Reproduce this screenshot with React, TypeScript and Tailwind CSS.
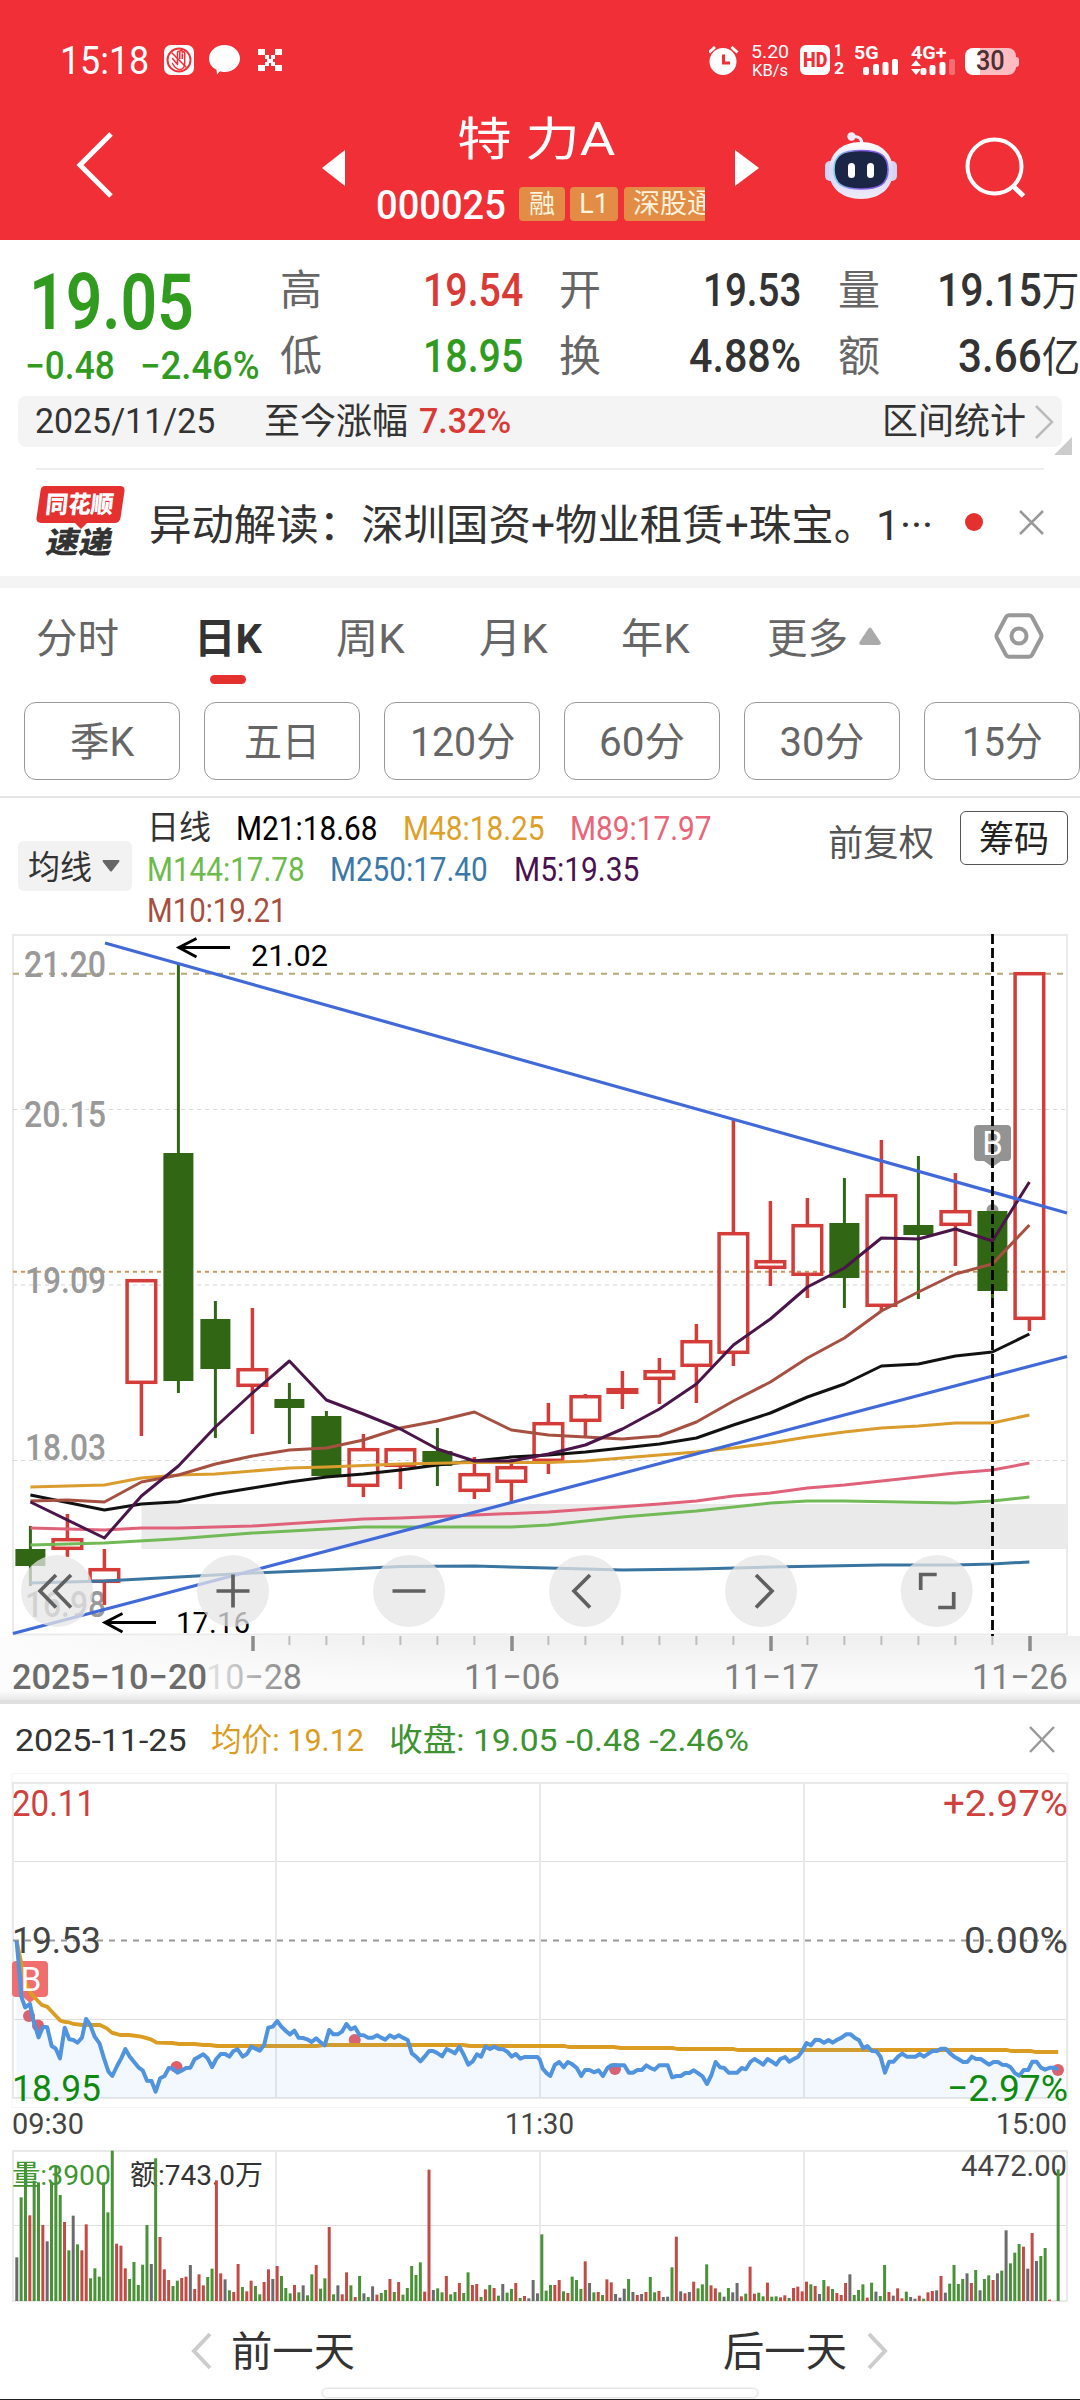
import { useLayoutEffect, useRef, useState, type ReactNode } from "react";

const FONT = "font-['Roboto','Noto_Sans_CJK_SC',sans-serif]";

/** A single line of text condensed or widened to an exact width. */
function Fit({ w, className = "", children }: { w: number; className?: string; children: ReactNode }) {
  const ref = useRef<HTMLSpanElement>(null);
  const [s, setS] = useState(1);
  useLayoutEffect(() => {
    if (ref.current) setS(w / ref.current.offsetWidth);
  }, [w]);
  return (
    <span className={"block shrink-0 leading-none " + className} style={{ width: w }}>
      <span ref={ref} className="inline-block origin-left whitespace-pre leading-none" style={{ transform: `scaleX(${s})` }}>
        {children}
      </span>
    </span>
  );
}

/* ---------- header ---------- */

function StatusBar() {
  return (
    <div className="flex h-10 items-center text-white">
      <Fit w={89} className="ml-[60px] pt-0.5 text-[39px]">15:18</Fit>
      <svg className="ml-[15px]" width="30" height="30" viewBox="0 0 30 30">
        <rect width="30" height="30" rx="7" fill="#fff" />
        <circle cx="15" cy="15" r="11.500" fill="none" stroke="#F12F37" strokeWidth="2" />
        <path d="M8.500 13.500l5 6V7.500a1.200 1.200 0 012.400 0V6.500a1.200 1.200 0 012.400 0v1.500a1.200 1.200 0 012.400 0V18c0 5-2 6.500-5 6.500s-5-2-7.200-6" fill="none" stroke="#F12F37" strokeWidth="1.500" strokeLinecap="round" strokeLinejoin="round" />
        <path d="M15.800 8v6M18.200 9v5M7.500 7.500l15 15" stroke="#F12F37" strokeWidth="1.500" />
      </svg>
      <svg className="ml-[15px]" width="31" height="30" viewBox="0 0 31 30">
        <path d="M15.500 0C24 0 31 6 31 13.500S24 27 15.500 27c-2 0-3.500-.4-4.500-.8L8 29.500l-.5-4.700C3 22.500 0 18.500 0 13.500 0 6 7 0 15.500 0z" fill="#fff" />
      </svg>
      <svg className="ml-[18px]" width="24" height="24" viewBox="0 0 24 24" fill="#fff">
        <path d="M0 1h7v6H0zM17 1h7v6h-7zM7 7h4v4H7zM13 7h4v4h-4zM9 11h6v4H9zM7 14h4v4H7zM13 14h4v4h-4zM0 17h7v6H0zM17 17h7v6h-7z" />
      </svg>
      <svg className="ml-[427px]" width="30" height="30" viewBox="0 0 30 30">
        <circle cx="14" cy="16.500" r="13.500" fill="#fff" />
        <path d="M0 7.500l6-5.500M28.500 7.500l-6-5.500" stroke="#fff" strokeWidth="3" />
        <path d="M14.500 9.500V18H21" stroke="#F12F37" strokeWidth="3" fill="none" />
      </svg>
      <div className="ml-3 flex flex-col gap-px pt-0.5">
        <Fit w={38} className="text-[18px]">5.20</Fit>
        <Fit w={36} className="ml-px text-[17px]">KB/s</Fit>
      </div>
      <div className="ml-[11px] flex h-[30px] w-[30px] items-center justify-center rounded-md bg-white">
        <Fit w={24} className="text-[21px] font-black text-[#F12F37]">HD</Fit>
      </div>
      <div className="ml-1 flex flex-col gap-0.5 text-[16px] font-bold">
        <Fit w={8} className="">1</Fit>
        <Fit w={10} className="">2</Fit>
      </div>
      <div className="ml-[10px] flex h-8 w-[46px] flex-col">
        <Fit w={25} className="text-[18px] font-bold">5G</Fit>
        <svg className="-mt-[3px] ml-[9px]" width="36" height="16" viewBox="0 0 36 16" fill="#fff">
          <rect x="0" y="8" width="6" height="8" rx="2" /><rect x="10" y="5" width="6" height="11" rx="2" />
          <rect x="19.500" y="3" width="6" height="13" rx="2" /><rect x="29" y="0" width="6" height="16" rx="2" />
        </svg>
      </div>
      <div className="ml-[11px] flex h-8 w-[46px] flex-col">
        <Fit w={35} className="text-[18px] font-bold">4G+</Fit>
        <svg className="-mt-[3px]" width="45" height="16" viewBox="0 0 45 16" fill="#fff">
          <path d="M0 7l5-6 5 6zM0 10h10l-5 6z" />
          <rect x="9.500" y="9" width="6" height="7" rx="2" /><rect x="18.500" y="6" width="6" height="10" rx="2" />
          <rect x="28.500" y="3" width="6" height="13" rx="2" /><rect x="38" y="0" width="6" height="16" rx="2" opacity=".3" />
        </svg>
      </div>
      <div className="ml-2 mt-[3px] flex h-[27px] w-[51px] items-center justify-center rounded-[8px] bg-gradient-to-r from-white from-30% to-[#FDBDC0] to-30%">
        <Fit w={29} className="text-[27px] font-medium text-[#4A3032]">30</Fit>
      </div>
      <div className="mt-[3px] h-2.5 w-[3px] rounded-r bg-[#FDBDC0]" />
    </div>
  );
}

function Robot() {
  return (
    <svg width="72" height="68" viewBox="0 0 72 68">
      <defs>
        <linearGradient id="shell" x1="0" y1="0" x2="0" y2="1">
          <stop offset="0" stopColor="#FFFFFF" /><stop offset=".5" stopColor="#DAD6F6" /><stop offset="1" stopColor="#EDEBFB" />
        </linearGradient>
        <linearGradient id="rim" x1="0" y1="0" x2="1" y2="0">
          <stop offset="0" stopColor="#7FD0F5" /><stop offset=".5" stopColor="#8B5BE0" /><stop offset="1" stopColor="#7A63E8" />
        </linearGradient>
      </defs>
      <path d="M27 4.500c7-.5 10 2 10 8" fill="none" stroke="#F0EDFF" strokeWidth="3" />
      <circle cx="26.500" cy="4.500" r="4.200" fill="#F0EDFF" />
      <rect x="0" y="29" width="12" height="20" rx="5" fill="#D6D2F4" />
      <rect x="60" y="29" width="12" height="20" rx="5" fill="#D6D2F4" />
      <path d="M36 10c20 0 32 12 32 29S55 67 36 67 4 56 4 39s12-29 32-29z" fill="url(#shell)" />
      <path d="M36 18.500c18 0 27 4 27 19S54 57 36 57 9 52.500 9 37.500s9-19 27-19z" fill="#1B2647" stroke="url(#rim)" strokeWidth="1.600" />
      <rect x="23" y="31" width="7" height="15" rx="3.500" fill="#fff" />
      <rect x="42" y="31" width="7" height="15" rx="3.500" fill="#fff" />
    </svg>
  );
}

function TitleBar() {
  return (
    <div className="flex h-40 items-start text-white">
      <svg className="ml-[74px] mt-[50px]" width="42" height="70" viewBox="0 0 42 70" fill="none" stroke="#fff" strokeWidth="5">
        <path d="M37 4L6 35l31 31" />
      </svg>
      <svg className="ml-[206px] mt-[70px]" width="23" height="36" fill="#fff"><path d="M23 0v36L0 18z" /></svg>
      <div className="ml-[31px] mt-[36px] flex w-[329px] flex-col">
        <Fit w={158} className="ml-[81px] text-[46px]">特 力A</Fit>
        <div className="mt-[25px] flex h-[34px] items-center overflow-x-clip">
          <Fit w={130} className="pt-0.5 text-[41px] font-medium">000025</Fit>
          <span className="ml-[13px] flex h-[34px] w-[46px] shrink-0 items-center justify-center rounded bg-[#E28C46] text-[26px] leading-none text-[#FFF3DC]">融</span>
          <span className="ml-[5px] flex h-[34px] w-12 shrink-0 items-center justify-center rounded bg-[#E28C46] text-[27px] leading-none text-[#FFF3DC]">L1</span>
          <span className="ml-1.5 flex h-[34px] w-[100px] shrink-0 items-center whitespace-nowrap rounded bg-[#E28C46] pl-[9px] text-[27px] leading-none text-[#FFF3DC]">深股通</span>
        </div>
      </div>
      <svg className="ml-[30px] mt-[70px]" width="24" height="36" fill="#fff"><path d="M0 0v36l24-18z" /></svg>
      <div className="ml-[66px] mt-[52px]"><Robot /></div>
      <svg className="ml-[68px] mt-[57px]" width="62" height="62" viewBox="0 0 62 62" fill="none" stroke="#fff" strokeWidth="4">
        <circle cx="29.500" cy="29.500" r="27" /><path d="M48 49l10.500 10" strokeWidth="5" />
      </svg>
    </div>
  );
}

/* ---------- quote ---------- */

function Cell({ label, children, w, gap, color }: { label: string; children: ReactNode; w: number; gap: number; color: string }) {
  return (
    <div className="flex h-[66px] items-center">
      <Fit w={42} className="pt-1 text-[42px] text-[#666]">{label}</Fit>
      <div className="shrink-0" style={{ width: gap }} />
      <Fit w={w} className={"pt-0.5 text-[46px] font-medium " + color}>{children}</Fit>
    </div>
  );
}

function Quote() {
  return (
    <div className="flex h-[156px]">
      <div className="ml-[25px] w-[255px] pt-[25px] font-medium text-[#319B1F]">
        <Fit w={165} className="ml-1 text-[77px] font-semibold">19.05</Fit>
        <div className="mt-[5px] flex">
          <Fit w={90} className="text-[38px]">−0.48</Fit>
          <Fit w={120} className="ml-[25px] text-[38px]">−2.46%</Fit>
        </div>
      </div>
      <div className="w-[279px] pt-4">
        <Cell label="高" gap={101} w={100} color="text-[#D93A36]">19.54</Cell>
        <Cell label="低" gap={101} w={100} color="text-[#319B1F]">18.95</Cell>
      </div>
      <div className="w-[279px] pt-4">
        <Cell label="开" gap={102} w={98} color="text-[#333]">19.53</Cell>
        <Cell label="换" gap={88} w={112} color="text-[#333]">4.88%</Cell>
      </div>
      <div className="pt-4">
        <Cell label="量" gap={57} w={142} color="text-[#333]">19.15<span className="text-[42px] font-normal">万</span></Cell>
        <Cell label="额" gap={78} w={122} color="text-[#333]">3.66<span className="text-[42px] font-normal">亿</span></Cell>
      </div>
    </div>
  );
}

function RangeBar() {
  return (
    <div className="relative mx-[18px] flex h-[51px] items-center rounded-lg bg-[#F4F4F4] text-[#333]">
      <Fit w={180} className="ml-[17px] text-[35px]">2025/11/25</Fit>
      <Fit w={144} className="ml-[49px] pt-px text-[36px]">至今涨幅</Fit>
      <Fit w={92} className="ml-[11px] text-[35px] font-medium text-[#D93A36]">7.32%</Fit>
      <Fit w={144} className="ml-auto pt-px text-[36px]">区间统计</Fit>
      <svg className="ml-2 mr-2" width="20" height="36" fill="none" stroke="#BBB" strokeWidth="2.500"><path d="M2 2l16 16L2 34" /></svg>
      <svg className="absolute -right-2.5 top-[41px]" width="18" height="18" fill="#CCC"><path d="M18 0v18H0z" /></svg>
    </div>
  );
}

function News() {
  return (
    <div className="mx-9 mt-[21px] flex h-[108px] items-start border-t-2 border-[#EEE]">
      <div className="relative mt-4 flex w-[89px] flex-col items-center">
        <svg className="absolute left-0 top-0" width="89" height="44" fill="#E53030"><path d="M9 0h75q5 0 4.500 5l-4 27q-1 5-6 5H51l-6 6-6-6H5q-5 0-4.500-5l4-27Q5 0 9 0z" /></svg>
        <div className="relative -skew-x-6"><Fit w={68} className="mt-[7px] text-[24px] font-black text-white">同花顺</Fit></div>
        <div className="mt-[11px] -skew-x-12"><Fit w={66} className="text-[30px] font-black text-[#333]">速递</Fit></div>
      </div>
      <Fit w={784} className="ml-[25px] mt-[35px] text-[42px] text-[#333]">异动解读：深圳国资+物业租赁+珠宝。1···</Fit>
      <div className="ml-[32px] mt-[43px] size-[18px] rounded-full bg-[#E53030]" />
      <svg className="ml-9 mt-10" width="25" height="25" stroke="#999" strokeWidth="2.500"><path d="M1 1l23 23M24 1L1 24" /></svg>
    </div>
  );
}

/* ---------- period tabs ---------- */

function Tabs() {
  return (
    <div className="flex h-[114px] items-start text-[#666]">
      <Fit w={83} className="ml-9 mt-[31px] text-[41px]">分时</Fit>
      <div className="ml-[75px] mt-[31px] flex w-[68px] flex-col items-center text-[#333]">
        <Fit w={68} className="text-[41px] font-bold">日K</Fit>
        <div className="mt-[15px] h-[9px] w-9 rounded-full bg-[#E53030]" />
      </div>
      <Fit w={69} className="ml-[74px] mt-[31px] text-[41px]">周K</Fit>
      <Fit w={69} className="ml-[74px] mt-[31px] text-[41px]">月K</Fit>
      <Fit w={69} className="ml-[73px] mt-[31px] text-[41px]">年K</Fit>
      <Fit w={81} className="ml-[77px] mt-[31px] text-[41px]">更多</Fit>
      <svg className="ml-[11px] mt-[39px]" width="22" height="18" fill="#AAA"><path d="M9.500 1.500q1.500-2 3 0L21.500 15q1 3-2 3h-17q-3 0-2-3z" /></svg>
      <svg className="ml-[113px] mt-[25px]" width="50" height="46" viewBox="0 0 50 46" fill="none" stroke="#999" strokeWidth="4">
        <path d="M15 2.200h20q2 0 3 1.800l9 17q1 2 0 4l-9 17q-1 1.800-3 1.800H15q-2 0-3-1.800l-9-17q-1-2 0-4l9-17q1-1.800 3-1.800z" />
        <circle cx="25" cy="23" r="7.500" />
      </svg>
    </div>
  );
}

const PERIODS: [string, number][] = [["季K", 64], ["五日", 76], ["120分", 105], ["60分", 86], ["30分", 85], ["15分", 81]];

function Periods() {
  return (
    <div className="flex h-24 gap-6 overflow-hidden border-b-2 border-[#E6E6E6] pl-6">
      {PERIODS.map(([t, w]) => (
        <div key={t} className="flex h-[78px] w-[156px] shrink-0 items-center justify-center rounded-xl border border-[#999] text-[#666]">
          <Fit w={w} className="pt-1 text-[40px]">{t}</Fit>
        </div>
      ))}
    </div>
  );
}

function Legend() {
  return (
    <div className="flex h-[135px] items-start">
      <div className="ml-[18px] mt-[43px] flex h-[50px] w-[114px] items-center rounded-md bg-[#F2F2F2]">
        <Fit w={64} className="ml-[10px] pt-0.5 text-[33px] text-[#333]">均线</Fit>
        <svg className="ml-2.5" width="18" height="12" fill="#666"><path d="M1 0h16q1 1 0 2L10 11q-1 1-2 0L1 2q-1-1 0-2z" /></svg>
      </div>
      <div className="ml-[15px] mt-[13px] flex w-[611px] flex-col gap-[7px] text-[34px]">
        <div className="flex">
          <Fit w={64} className="text-[33px] text-[#333]">日线</Fit>
          <Fit w={142} className="ml-[25px] text-black">M21:18.68</Fit>
          <Fit w={142} className="ml-[25px] text-[#DFA028]">M48:18.25</Fit>
          <Fit w={142} className="ml-[25px] text-[#EA6478]">M89:17.97</Fit>
        </div>
        <div className="flex">
          <Fit w={158} className="text-[#6CBB4B]">M144:17.78</Fit>
          <Fit w={158} className="ml-[25px] text-[#3A78A8]">M250:17.40</Fit>
          <Fit w={125} className="ml-[26px] text-[#4A1150]">M5:19.35</Fit>
        </div>
        <Fit w={140} className="text-[#A84E3E]">M10:19.21</Fit>
      </div>
      <Fit w={106} className="ml-[70px] mt-[28px] text-[36px] text-[#555]">前复权</Fit>
      <div className="ml-[26px] mt-[13px] flex h-[54px] w-[108px] items-center justify-center rounded-md border border-[#555] text-[#222]">
        <Fit w={70} className="pt-[3px] text-[36px]">筹码</Fit>
      </div>
    </div>
  );
}

/* ---------- daily candles ---------- */

const step = (i: number) => 30.4 + 37 * i;

/** up?, high, body top, body bottom, low */
const CANDLES: [boolean, number, number, number, number][] = [
  [false, 1526, 1549, 1566, 1586], [true, 1514, 1538, 1550, 1557], [true, 1549, 1568, 1583, 1605],
  [true, 1279, 1279, 1384, 1436], [false, 964, 1153, 1381, 1393], [false, 1301, 1319, 1369, 1438],
  [true, 1308, 1368, 1387, 1434], [false, 1383, 1399, 1408, 1444], [false, 1411, 1416, 1476, 1476],
  [true, 1434, 1448, 1487, 1497], [true, 1448, 1448, 1467, 1489], [false, 1428, 1451, 1466, 1486],
  [true, 1457, 1473, 1492, 1499], [true, 1459, 1466, 1483, 1502], [true, 1403, 1422, 1462, 1474],
  [true, 1394, 1395, 1422, 1436], [true, 1371, 1388, 1394, 1409], [true, 1358, 1370, 1380, 1404],
  [true, 1324, 1340, 1367, 1403], [true, 1119, 1232, 1354, 1366], [true, 1201, 1260, 1269, 1286],
  [true, 1198, 1224, 1276, 1298], [false, 1178, 1223, 1278, 1308], [true, 1140, 1194, 1307, 1311],
  [false, 1156, 1225, 1235, 1299], [true, 1173, 1210, 1226, 1266], [false, 1211, 1211, 1291, 1298],
  [true, 972, 972, 1320, 1331],
];

/** index, y pairs */
const AVERAGES: { color: string; pts: [number, number][] }[] = [
  { color: "#3A74A0", pts: [[0, 1583], [1, 1582], [2, 1581], [4, 1577], [6, 1573], [8, 1570], [10, 1566.5], [12, 1566], [14, 1568], [16, 1570], [18, 1569], [20, 1567], [23, 1565], [25, 1565], [26, 1564], [27, 1562]] },
  { color: "#72B957", pts: [[0, 1545], [2, 1543], [4, 1538.7], [6, 1533], [9, 1527], [13, 1527], [14, 1525], [16, 1517], [18, 1511], [20, 1503], [21, 1501], [22, 1501], [25, 1503], [26, 1501], [27, 1497]] },
  { color: "#E0627A", pts: [[0, 1528], [2, 1530], [3, 1528], [4, 1528], [6, 1526], [9, 1519], [10, 1518], [12, 1515], [14, 1512], [17, 1504], [18, 1501], [19, 1496], [20, 1493], [21, 1488], [22, 1485], [25, 1473], [26, 1470], [27, 1463]] },
  { color: "#111", pts: [[0, 1495], [2, 1510], [3, 1504], [4, 1501.7], [5, 1494], [6, 1488], [7, 1482], [8, 1477], [9, 1474], [10, 1470], [11, 1465], [12, 1461], [13, 1457], [14, 1455], [15, 1452], [16, 1448], [17, 1444], [18, 1438], [19, 1425], [20, 1413], [21, 1397], [22, 1384], [23, 1366], [24, 1364], [25, 1356], [26, 1352], [27, 1334]] },
  { color: "#DB9C2E", pts: [[0, 1487], [2, 1485], [3, 1478], [4, 1475], [5, 1474], [7, 1468], [8, 1467], [10, 1464], [12, 1462.5], [14, 1462.5], [15, 1461], [18, 1452], [19, 1448], [20, 1443], [21, 1437], [22, 1432], [23, 1428], [24, 1426], [25, 1423], [26, 1423], [27, 1415]] },
  { color: "#A65042", pts: [[0, 1501], [1, 1500], [2, 1502], [3, 1482], [4, 1475], [5, 1464], [6, 1456], [7, 1450], [8, 1448], [9, 1440], [10, 1428], [11, 1421], [12, 1412], [13, 1430], [14, 1435], [15, 1437], [16, 1439], [17, 1436], [18, 1422], [19, 1401], [20, 1382], [21, 1358], [22, 1338], [23, 1311], [24, 1292], [25, 1274], [26, 1264], [27, 1225]] },
  { color: "#4A1548", pts: [[0, 1502], [2, 1538], [3, 1496], [4, 1466], [5, 1427], [6, 1393], [7, 1361], [8, 1400], [9, 1414], [10, 1429], [11, 1449], [12, 1461], [13, 1461], [14, 1454], [15, 1445], [16, 1429], [17, 1409], [18, 1384], [19, 1345], [20, 1319], [21, 1287], [22, 1268], [23, 1238], [24, 1239], [25, 1229], [26, 1241], [27, 1182]] },
];

type LabelProps = { x: number; y: number; w: number; size: number; fill: string; weight?: number; children: string };

function Label({ x, y, w, size, fill, weight = 400, children }: LabelProps) {
  return (
    <text x={x} y={y} fontSize={size} fill={fill} fontWeight={weight} textLength={w} lengthAdjust="spacingAndGlyphs">{children}</text>
  );
}

const CONTROLS: [number, string][] = [
  [57, "M-1-16L-17 0-1 16.500M14-16L-2 0 14 16.500"],
  [233, "M-16.500 0h33M0-16.500v33"],
  [409, "M-16.500 0h33"],
  [585, "M5-16L-11 0 5 16.500"],
  [761, "M-5-16L11 0-5 16.500"],
  [936.7, "M0-16.500H-16V-1M17 1V16.500H1.500"],
];

function CandleChart() {
  return (
    <div className="relative h-[771px]">
      <div className="absolute inset-x-0 top-[703px] h-[56px] bg-gradient-to-b from-[#EFEFEF] to-[#FBFBFB] to-80%" />
      <div className="absolute left-0 top-[703px] h-[56px] w-[420px] bg-gradient-to-r from-[#FCFCFC] to-transparent" />
      <div className="absolute inset-x-0 top-[759px] h-2 bg-gradient-to-b from-[#FAFAFA] to-[#E8E8E8]" />
      <div className="absolute inset-x-0 top-[767px] h-1 bg-[#DFDFDF]" />
      <svg className="relative block" width="1080" height="771" viewBox="0 933 1080 771" fill="none">
        <rect x="13" y="935" width="1054" height="699.500" stroke="#EAEAEA" strokeWidth="2" />
        <rect x="141.500" y="1504" width="925.500" height="45" fill="#EAEAEA" />
        <path d="M13 1109.500H1067M13 1460.500H1067" stroke="#D8D8D8" strokeDasharray="4 4" />
        <path d="M13 1285H1067" stroke="#EAEAEA" strokeWidth="2" strokeDasharray="4 4" />
        <path d="M13 973.700H1067" stroke="#B8A878" strokeWidth="2" strokeDasharray="6 6" />
        <path d="M13 1271.700H1067" stroke="#C8965A" strokeWidth="2" strokeDasharray="4 4" />
        <g>
          <Label x={24} y={977} w={82} size={36} weight={500} fill="#999">21.20</Label>
          <Label x={24} y={1127} w={82} size={36} weight={500} fill="#999">20.15</Label>
          <Label x={25} y={1293} w={81} size={36} weight={500} fill="#999">19.09</Label>
          <Label x={25} y={1460} w={81} size={36} weight={500} fill="#999">18.03</Label>
          <Label x={25} y={1617} w={81} size={36} weight={500} fill="#999">16.98</Label>
        </g>
        <circle cx="992.500" cy="1210" r="6" fill="#999" />
        {CANDLES.map(([up, h, t, b, l], i) => {
          const x = step(i);
          return up ? (
            <g key={i} stroke="#D43C3A" strokeWidth="3.500">
              <path d={`M${x} ${h}V${t + 1}M${x} ${b - 1}V${l}`} />
              <rect x={x - 14.3} y={t + 1.700} width="28.600" height={Math.max(b - t - 3.4, 1)} />
            </g>
          ) : (
            <g key={i} fill="#306614">
              <rect x={x - 1.5} y={h} width="3" height={l - h} />
              <rect x={x - 15} y={t} width="30" height={b - t} />
            </g>
          );
        })}
        {AVERAGES.map((a) => (
          <polyline key={a.color} points={a.pts.map(([i, y]) => `${step(i)},${y}`).join(" ")} stroke={a.color} strokeWidth="3" strokeLinejoin="round" />
        ))}
        <path d="M105 943L1067 1213M13 1633.500L1067 1356.500" stroke="#4169D8" strokeWidth="3.200" />
        <rect x="974" y="1125" width="37" height="36" rx="4" fill="#939393" />
        <path d="M984 1161l8.500 6 8.500-6z" fill="#939393" />
        <text x="992.500" y="1155" fontSize="33" fill="#fff" textAnchor="middle">B</text>
        <path d="M992.500 934V1636" stroke="#000" strokeWidth="2.800" strokeDasharray="10 4" />
        <path d="M230 947.500H179M196.500 938.500L179 947.500l17.500 9.500M156 1622.500H105M122.500 1613.500L105 1622.500l17.500 9.500" stroke="#000" strokeWidth="3" />
        <Label x={251} y={966} w={77} size={30} fill="#000">21.02</Label>
        <Label x={176} y={1633} w={74} size={30} fill="#000">17.16</Label>
        {CONTROLS.map(([x, d]) => (
          <g key={x} transform={`translate(${x} 1591)`}>
            <circle r="36" fill="#E6E6E6" opacity=".75" />
            <path d={d} stroke="#606060" strokeWidth="3.700" />
          </g>
        ))}
        <g stroke="#BDBDBD" strokeWidth="2">
          {Array.from({ length: 21 }, (_, k) => k + 7).filter((i) => i % 7 !== 6).map((i) => <path key={i} d={`M${step(i)} 1636v9`} />)}
        </g>
        <path d="M253 1636v15M512 1636v15M771 1636v15M1030 1636v15" stroke="#8C8C8C" strokeWidth="3.500" />
        <Label x={12} y={1689} w={195} size={35} weight={500} fill="#6C6C6C">2025−10−20</Label>
        <linearGradient id="fadeIn" gradientUnits="userSpaceOnUse" x1="200" y1="0" x2="290" y2="0">
          <stop offset="0" stopColor="#EEE" /><stop offset="1" stopColor="#888" />
        </linearGradient>
        <Label x={206} y={1689} w={96} size={35} fill="url(#fadeIn)">10−28</Label>
        <Label x={464} y={1689} w={96} size={35} fill="#808080">11−06</Label>
        <Label x={724} y={1689} w={95} size={35} fill="#808080">11−17</Label>
        <Label x={972} y={1689} w={96} size={35} fill="#808080">11−26</Label>
      </svg>
    </div>
  );
}

/* ---------- intraday panel ---------- */

const PRICE =
  "48,722 55,800 62,890 73,922 87,912 98,965 112,1012 125,980 137,982 150,1038 162,1046 174,1075 188,983 201,1018 213,1020 225,1028 238,1013 250,957 262,975 275,1010 289,1030 302,1075 315,1115 326,1128 340,1098 352,1075 364,1047 377,1070 402,1102 415,1112 427,1142 440,1143 452,1175 465,1135 478,1128 490,1104 503,1106 515,1118 527,1112 540,1104 553,1103 565,1078 578,1070 590,1063 603,1075 616,1101 628,1077 641,1062 654,1062 666,1070 678,1053 690,1048 705,1070 717,1062 730,1040 742,1046 754,1052 767,1035 779,983 792,980 805,963 817,980 830,993 842,1003 855,992 867,1013 880,1014 892,1018 905,1026 918,1015 930,1026 943,1036 956,990 968,1003 981,1003 993,995 1006,972 1018,988 1031,982 1044,1005 1056,1006 1069,1013 1082,1013 1095,1006 1107,1013 1119,1019 1132,1006 1145,1013 1158,1006 1170,1013 1184,1020 1196,1060 1208,1070 1221,1084 1233,1070 1246,1053 1258,1053 1271,1060 1284,1069 1297,1047 1309,1053 1321,1060 1334,1040 1347,1065 1360,1094 1373,1084 1385,1063 1397,1070 1410,1040 1423,1047 1436,1040 1448,1047 1461,1048 1473,1055 1486,1070 1498,1062 1511,1076 1523,1071 1561,1071 1568,1080 1576,1106 1588,1120 1598,1128 1611,1095 1624,1086 1637,1102 1649,1086 1662,1093 1675,1104 1688,1128 1699,1110 1712,1110 1725,1117 1738,1111 1751,1128 1764,1104 1775,1096 1813,1096 1826,1118 1838,1118 1851,1110 1864,1110 1877,1096 1889,1104 1901,1109 1914,1096 1939,1096 1952,1132 1965,1128 1977,1128 1990,1119 2002,1119 2015,1111 2028,1120 2040,1129 2053,1152 2066,1125 2078,1086 2091,1102 2103,1104 2116,1118 2141,1118 2154,1104 2166,1108 2179,1086 2191,1077 2204,1085 2216,1094 2229,1077 2242,1085 2254,1094 2266,1077 2280,1071 2292,1085 2305,1077 2318,1070 2330,1053 2342,1029 2355,1036 2368,1019 2380,1020 2393,1028 2406,1020 2418,1028 2430,1020 2444,1013 2457,1003 2470,1003 2482,1013 2495,1021 2507,1045 2519,1038 2532,1053 2545,1054 2557,1070 2570,1118 2582,1085 2595,1085 2608,1070 2620,1061 2633,1070 2658,1070 2671,1062 2683,1070 2696,1061 2708,1053 2721,1053 2733,1046 2746,1046 2759,1060 2771,1070 2784,1078 2797,1086 2809,1086 2822,1070 2835,1077 2848,1077 2872,1094 2885,1086 2898,1086 2910,1094 2923,1095 2935,1102 2948,1120 2960,1127 2973,1110 2986,1110 2998,1085 3010,1085 3023,1103 3035,1109 3050,1103 3063,1103 3073,1109";

const MEAN =
  "48,722 60,780 75,850 90,880 110,903 122,915 137,920 155,940 175,962 187,966 200,967 213,972 240,975 290,975 310,985 325,998 350,1005 375,1005 410,1010 438,1018 455,1028 500,1029 520,1032 565,1032 590,1035 610,1035 630,1038 920,1038 940,1035 1345,1035 1365,1038 1638,1038 1653,1041 1783,1041 1803,1044 1953,1044 1968,1047 2128,1047 2143,1050 2923,1050 2938,1053 2993,1053 3008,1056 3073,1056";

const DOTS: [number, number][] = [[29, 2016], [38, 2025.5], [176.5, 2067], [354.7, 2040], [615, 2069], [1058, 2070]];

/** Per-minute volume: g falling, r rising, k flat, followed by the bar's top edge. */
const VOLUME =
  "k382 g202 g98 r256 g152 g157 r285 k334 g157 g110 g195 r276 g361 k257 g343 r361 r283 g445 g415 g440 g157 g247 g62 r341 r347 r415 g447 g396 g465 g404 g285 k402 g85 r321 r418 r450 g468 g452 r444 r440 k405 r477 r433 r466 g441 g416 r151 r430 k448 g481 r486 r402 g471 r484 r452 g468 g493 r456 r418 k447 r408 g438 g474 g490 r465 g487 k466 g496 g433 r405 g476 g445 r291 g493 k466 r493 r427 g466 r501 g438 k490 g501 k469 r494 g489 g480 r447 g486 r456 g494 g474 g408 g435 g397 r485 r119 k480 g475 g487 r438 g493 g486 r459 g489 g427 r465 r462 g501 r478 g465 r474 g497 k462 g488 g477 r459 g504 r498 k505 k450 k490 g313 g482 g465 r465 r450 g484 r489 g440 g450 g477 r394 k459 g487 r486 g495 r448 r457 k492 k503 k476 g447 k486 r495 k492 r486 g441 g487 r483 k501 k500 g412 r320 k484 r490 k486 r455 g475 g463 g403 r466 r475 g487 k500 g474 k487 k459 r499 g491 r410 r491 g488 g499 r458 g500 g499 r502 r496 g504 r474 r470 r484 r455 g463 r468 k492 g450 r469 g477 r489 r495 r459 k433 g495 g480 g463 r503 g458 k485 g498 g405 r486 k497 r475 r505 g485 k501 k506 r497 g506 r487 r483 k481 r438 k488 g461 g405 g462 g447 k430 r459 g420 k481 g447 g436 r450 k430 g422 k301 g400 g368 g342 r350 k416 r309 k393 g378 g354 r509 g513 g118".split(" ");

const VOLUME_COLORS: Record<string, string> = { g: "#4A9238", r: "#C44A46", k: "#6B6B6B" };

function IntradayCharts() {
  return (
    <svg className="block" width="1080" height="533" viewBox="0 1770 1080 533" fill="none">
      <rect x="12" y="1773.500" width="1056" height="334" stroke="#F5F5F5" />
      <path d="M13 1861.500H1067M13 2019.500H1067M13 2225.500H1067" stroke="#DFDFDF" />
      <path d="M13 1783H1067V2098H13zM276 1783V2098M540 1783V2098M804 1783V2098M13 2301V2151H1067V2301zM276 2151V2301M540 2151V2301M804 2151V2301" stroke="#E9E9E9" strokeWidth="2" />
      <path d="M13 1940.500H1067" stroke="#999" strokeWidth="2" strokeDasharray="6 6" />
      <Label x={12} y={1815.5} w={83} size={37} fill="#D0403C">20.11</Label>
      <Label x={12} y={1953} w={89} size={37} fill="#444">19.53</Label>
      <Label x={943} y={1815.5} w={125} size={37} fill="#D0403C">+2.97%</Label>
      <Label x={964} y={1953} w={104} size={37} fill="#444">0.00%</Label>
      <rect x="12" y="1961" width="36" height="36" rx="4" fill="#F06E6E" />
      <path d="M23 1997l7 6 7-6z" fill="#F06E6E" />
      {DOTS.map(([x, y]) => <circle key={x} cx={x} cy={y} r="6" fill="#E0606A" />)}
      <g transform="translate(0 1700) scale(.34435 .33333)">
        <polyline points={MEAN} stroke="#DB9C22" strokeWidth="3.800" vectorEffect="non-scaling-stroke" />
        <polygon points={`${PRICE} 3073,1194 48,1194`} fill="#5AA0F0" opacity=".07" />
        <polyline points={PRICE} stroke="#5093DE" strokeWidth="4" vectorEffect="non-scaling-stroke" strokeLinejoin="round" />
      </g>
      <text x="31" y="1991" fontSize="33" fill="#fff" textAnchor="middle">B</text>
      <Label x={12} y={2101} w={89} size={37} fill="#0E8A10">18.95</Label>
      <Label x={947} y={2101} w={121} size={37} fill="#0E8A10">−2.97%</Label>
      <Label x={12} y={2134} w={72} size={29} fill="#444">09:30</Label>
      <Label x={505} y={2134} w={69} size={29} fill="#444">11:30</Label>
      <Label x={996} y={2134} w={71} size={29} fill="#444">15:00</Label>
      <Label x={12} y={2185} w={99} size={28} fill="#3F9630">量:3900</Label>
      <Label x={130} y={2185} w={133} size={28} fill="#333">额:743.0万</Label>
      <Label x={961} y={2176} w={106} size={29} fill="#444">4472.00</Label>
      {VOLUME.map((v, i) => {
        const y = 2130 + Number(v.slice(1)) / 3;
        return <rect key={i} x={15.3 + i * 4.339} y={y} width="3" height={2301 - y} fill={VOLUME_COLORS[v[0]]} />;
      })}
    </svg>
  );
}

function Intraday() {
  return (
    <div className="bg-white">
      <div className="flex h-[66px] items-center pt-1.5 text-[32px]">
        <Fit w={172} className="ml-[15px] text-[#333]">2025-11-25</Fit>
        <Fit w={153} className="ml-6 text-[#DB9C22]">均价: 19.12</Fit>
        <Fit w={360} className="ml-[25px] text-[#3D9330]">收盘: 19.05 -0.48 -2.46%</Fit>
        <svg className="-mt-0.5 ml-[280px]" width="26" height="27" stroke="#999" strokeWidth="2.500"><path d="M1 1l24 25M25 1L1 26" /></svg>
      </div>
      <IntradayCharts />
      <div className="flex h-[84px] items-start pt-[29px] text-[#333]">
        <svg className="ml-[191px]" width="22" height="38" fill="none" stroke="#CCC" strokeWidth="4"><path d="M19 2L3 19l16 17" /></svg>
        <Fit w={124} className="ml-[18px] text-[41px]">前一天</Fit>
        <Fit w={124} className="ml-[368px] text-[41px]">后一天</Fit>
        <svg className="ml-[19px]" width="22" height="38" fill="none" stroke="#CCC" strokeWidth="4"><path d="M3 2l16 17L3 36" /></svg>
      </div>
      <div className="flex h-[13px] justify-center border-b border-[#222] pt-0.5">
        <div className="h-2 w-[434px] rounded-full bg-white shadow-[0_0_3px_rgba(0,0,0,.3)]" />
      </div>
    </div>
  );
}

export default function App() {
  return (
    <div className={"h-[2400px] w-[1080px] overflow-hidden bg-white " + FONT}>
      <div className="h-60 bg-[#F12F37] pt-10">
        <StatusBar />
        <TitleBar />
      </div>
      <Quote />
      <RangeBar />
      <News />
      <div className="h-3 bg-[#F4F4F4]" />
      <Tabs />
      <Periods />
      <Legend />
      <CandleChart />
      <Intraday />
    </div>
  );
}
